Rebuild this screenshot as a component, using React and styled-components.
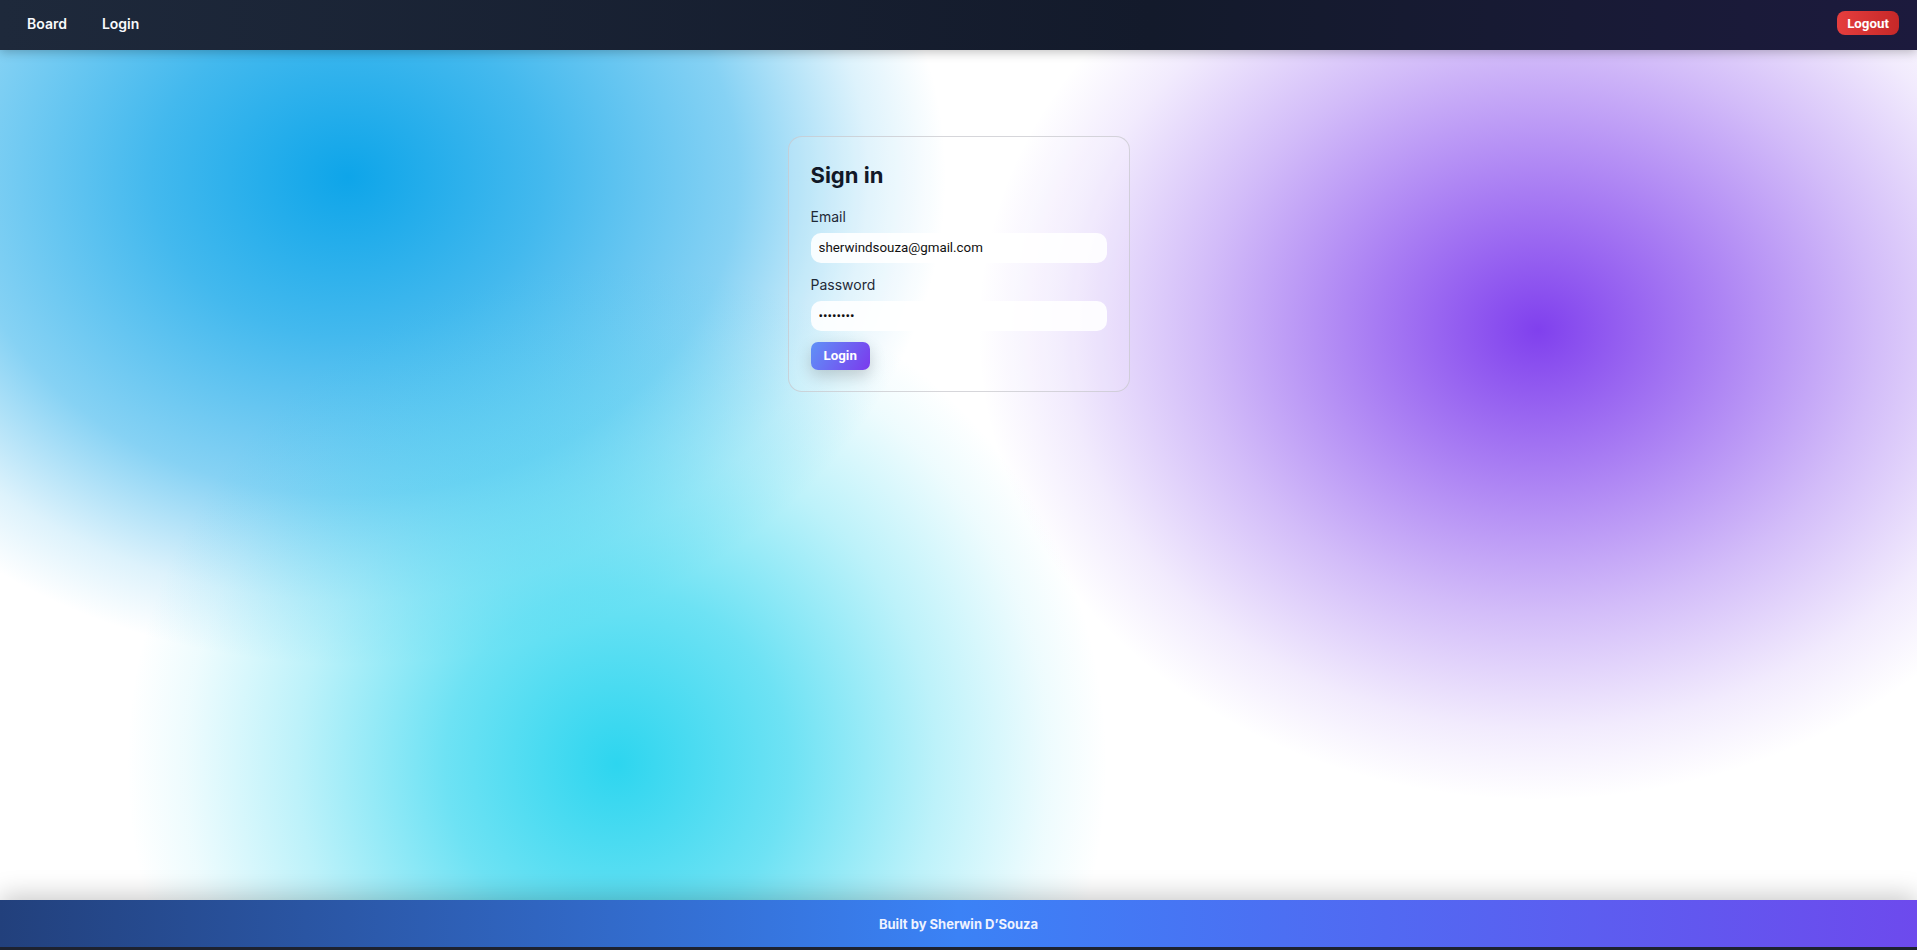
import React from 'react'
import styled, { createGlobalStyle } from 'styled-components'

const GlobalStyle = createGlobalStyle`
    * { box-sizing: border-box; }
    html, body {
        margin: 0;
        padding: 0;
        background: #1d2230;
        font-family: Inter, "Noto Sans", sans-serif;
    }
`;

export default function App() {
    return (
        <>
            <GlobalStyle />
            <Page>
                <NavBar>
                    <NavLinks>
                        <NavLink>Board</NavLink>
                        <NavLink>Login</NavLink>
                    </NavLinks>
                    <LogoutButton>Logout</LogoutButton>
                </NavBar>

                <Main>
                    <Card>
                        <Title>Sign in</Title>
                        <Field>
                            <Label>Email</Label>
                            <Input type="email" defaultValue="sherwindsouza@gmail.com" />
                        </Field>
                        <Field>
                            <Label>Password</Label>
                            <Input type="password" defaultValue="password" />
                        </Field>
                        <SubmitButton>Login</SubmitButton>
                    </Card>
                </Main>

                <Footer>Built by Sherwin D’Souza</Footer>
            </Page>
        </>
    )
}

const Page = styled.div`
    min-height: 100vh;
    display: flex;
    flex-direction: column;
`;

const NavBar = styled.nav`
    position: relative;
    z-index: 2;
    height: 50px;
    padding: 0 18px 4px 27px;
    display: flex;
    align-items: center;
    justify-content: space-between;
    background: linear-gradient(to right, #1e293b, #131a2b 60%, #1c1a3d);
    box-shadow: 0 2px 10px rgba(0, 0, 0, 0.25);
`;

const NavLinks = styled.div`
    display: flex;
    gap: 35px;
`;

const NavLink = styled.a`
    color: #f8fafc;
    font-size: 14px;
    font-weight: 600;
    cursor: pointer;
`;

const LogoutButton = styled.button`
    height: 24px;
    padding: 0 10px;
    border: none;
    border-radius: 8px;
    background: linear-gradient(to right, #e53e3e, #c62828);
    color: #ffffff;
    font-family: Roboto, "Liberation Sans", sans-serif;
    font-size: 13.33px;
    font-weight: 700;
    cursor: pointer;
`;

const Main = styled.main`
    flex: 1;
    display: flex;
    justify-content: center;
    align-items: flex-start;
    padding-top: 86px;
    background-color: #ffffff;
    background-image:
        radial-gradient(ellipse 560px 470px at 1538px 280px,
            rgba(124, 58, 237, 0.97) 0%,
            rgba(124, 58, 237, 0.66) 30%,
            rgba(124, 58, 237, 0.34) 60%,
            rgba(124, 58, 237, 0.1) 85%,
            rgba(124, 58, 237, 0) 100%),
        radial-gradient(ellipse 490px 500px at 617px 714px,
            rgba(34, 211, 238, 0.95) 0%,
            rgba(34, 211, 238, 0.66) 35%,
            rgba(34, 211, 238, 0.3) 65%,
            rgba(34, 211, 238, 0.08) 88%,
            rgba(34, 211, 238, 0) 100%),
        radial-gradient(ellipse 650px 530px at 348px 127px,
            rgba(14, 165, 233, 1) 0%,
            rgba(14, 165, 233, 0.78) 30%,
            rgba(14, 165, 233, 0.5) 60%,
            rgba(14, 165, 233, 0.14) 80%,
            rgba(14, 165, 233, 0) 92%);
`;

const Card = styled.form`
    width: 342px;
    padding: 24px 22px 21px;
    border: 1px solid rgba(200, 200, 205, 0.75);
    border-radius: 14px;
    background: rgba(255, 255, 255, 0.12);
    display: flex;
    flex-direction: column;
    align-items: flex-start;
`;

const Title = styled.h2`
    margin: 0 0 17px;
    font-size: 22px;
    line-height: 1.3;
    font-weight: 700;
    color: #111827;
`;

const Field = styled.div`
    width: 100%;
    display: flex;
    flex-direction: column;
    gap: 6px;
    margin-bottom: 12px;
`;

const Label = styled.label`
    font-size: 14px;
    line-height: 20px;
    color: #1f2937;
`;

const Input = styled.input`
    width: 100%;
    height: 30px;
    padding: 0 8px;
    border: none;
    border-radius: 10px;
    background: rgba(255, 255, 255, 0.88);
    color: #111111;
    font-family: Roboto, "Liberation Sans", sans-serif;
    font-size: 13.33px;
    outline: none;
`;

const SubmitButton = styled.button`
    height: 28px;
    margin-top: -1px;
    padding: 0 13px;
    border: none;
    border-radius: 7px;
    background: linear-gradient(120deg, #5f92f7, #7b3aed);
    color: #ffffff;
    font-family: Roboto, "Liberation Sans", sans-serif;
    font-size: 13.33px;
    font-weight: 700;
    box-shadow: 0 6px 16px rgba(0, 0, 0, 0.18);
    cursor: pointer;
`;

const Footer = styled.footer`
    height: 50px;
    border-bottom: 3px solid #1d2230;
    display: flex;
    align-items: center;
    justify-content: center;
    background: linear-gradient(to right, #22407c, #3b82f6 50%, #6d4aed);
    color: #eef2ff;
    font-size: 13px;
    font-weight: 700;
    box-shadow: 0 -4px 26px rgba(0, 0, 0, 0.22);
`;
